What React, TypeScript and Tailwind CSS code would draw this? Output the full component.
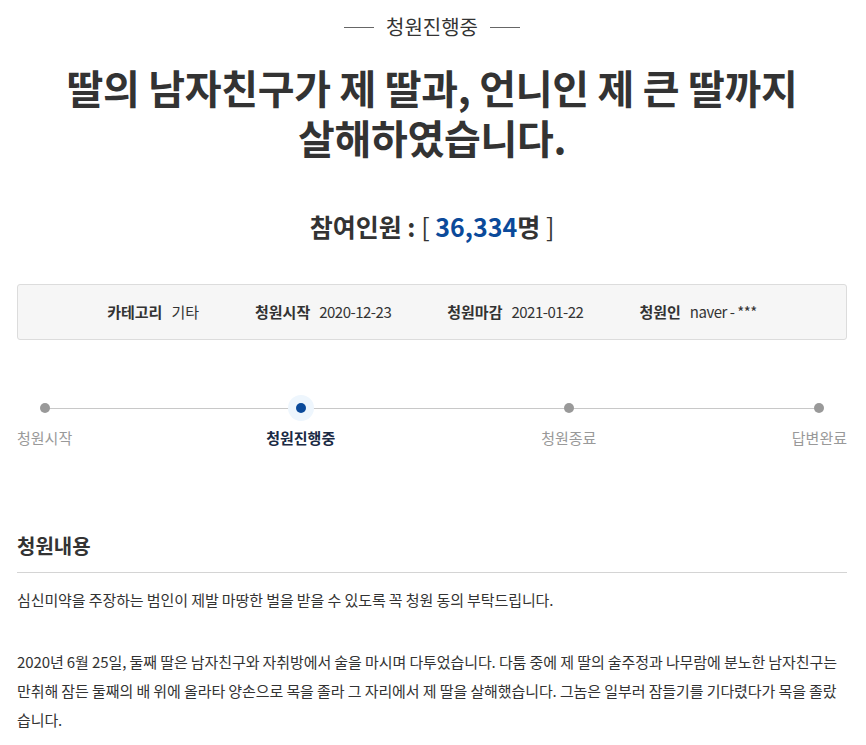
const font = { fontFamily: '"Noto Sans CJK KR", "Noto Sans", sans-serif' };

const steps = [
  { label: '청원시작', active: false },
  { label: '청원진행중', active: true },
  { label: '청원종료', active: false },
  { label: '답변완료', active: false },
];

function Step({ label, active, className }: { label: string; active: boolean; className?: string }) {
  return (
    <div className={`flex flex-col items-center ${className ?? ''}`}>
      <div className="h-[30px] flex items-center justify-center">
        {active ? (
          <div className="w-[26px] h-[26px] rounded-full bg-[#eef6fd] flex items-center justify-center">
            <div className="w-[10px] h-[10px] rounded-full bg-[#0b4a9a]" />
          </div>
        ) : (
          <div className="w-[10px] h-[10px] rounded-full bg-[#999]" />
        )}
      </div>
      <div
        className={`mt-[5px] text-[15px] leading-[20px] whitespace-nowrap ${
          active ? 'font-bold text-[#1a2a44]' : 'text-[#999]'
        }`}
      >
        {label}
      </div>
    </div>
  );
}

export default function App() {
  return (
    <div className="bg-white w-[866px] min-h-[745px] pl-[17px] pr-[19px] text-[#333]" style={font}>
      <div className="flex items-center justify-center gap-[12px] pt-[12px]">
        <span className="w-[30px] h-px bg-[#666]" />
        <span className="text-[20px] leading-[30px] text-[#333]">청원진행중</span>
        <span className="w-[30px] h-px bg-[#666]" />
      </div>

      <h1 className="mt-[20px] text-center text-[40px] leading-[50px] font-bold text-[#333] tracking-[-0.3px]">
        딸의 남자친구가 제 딸과, 언니인 제 큰 딸까지
        <br />
        살해하였습니다.
      </h1>

      <h2 className="mt-[47px] text-center text-[25px] leading-[34px] font-bold text-[#333]">
        참여인원 : <span className="font-normal">[</span>{' '}
        <span className="text-[#0b4a9a]">36,334</span>명{' '}
        <span className="font-normal">]</span>
      </h2>

      <div className="mt-[41px] h-[56px] border border-[#dcdcdc] rounded-[3px] bg-[#f6f6f6] flex items-center justify-center gap-[56px] text-[15px] text-[#333]">
        <div className="flex items-center gap-[9px]">
          <span className="font-bold">카테고리</span>
          <span>기타</span>
        </div>
        <div className="flex items-center gap-[9px]">
          <span className="font-bold">청원시작</span>
          <span className="tracking-[-0.5px]">2020-12-23</span>
        </div>
        <div className="flex items-center gap-[9px]">
          <span className="font-bold">청원마감</span>
          <span className="tracking-[-0.5px]">2021-01-22</span>
        </div>
        <div className="flex items-center gap-[9px]">
          <span className="font-bold">청원인</span>
          <span className="tracking-[-0.5px]">naver - ***</span>
        </div>
      </div>

      <div className="relative mt-[53px] flex">
        <div className="absolute left-[26px] right-[26px] top-[15px] h-px bg-[#c8c8c8]" />
        <Step {...steps[0]} className="relative" />
        <Step {...steps[1]} className="relative ml-[194px]" />
        <Step {...steps[2]} className="relative ml-[206px]" />
        <Step {...steps[3]} className="relative ml-auto" />
      </div>

      <h3 className="mt-[83px] text-[20px] leading-[30px] font-bold text-[#333] pb-[11px] border-b border-[#d4d4d4]">
        청원내용
      </h3>

      <div className="mt-[12px] text-[15px] leading-[29px] text-[#333] tracking-[-0.1px]">
        <p>심신미약을 주장하는 범인이 제발 마땅한 벌을 받을 수 있도록 꼭 청원 동의 부탁드립니다.</p>
        <p className="mt-[33px]">
          2020년 6월 25일, 둘째 딸은 남자친구와 자취방에서 술을 마시며 다투었습니다. 다툼 중에 제 딸의 술주정과 나무람에 분노한 남자친구는 만취해 잠든 둘째의 배 위에 올라타 양손으로 목을 졸라 그 자리에서 제 딸을 살해했습니다. 그놈은 일부러 잠들기를 기다렸다가 목을 졸랐습니다.
        </p>
      </div>
    </div>
  );
}
